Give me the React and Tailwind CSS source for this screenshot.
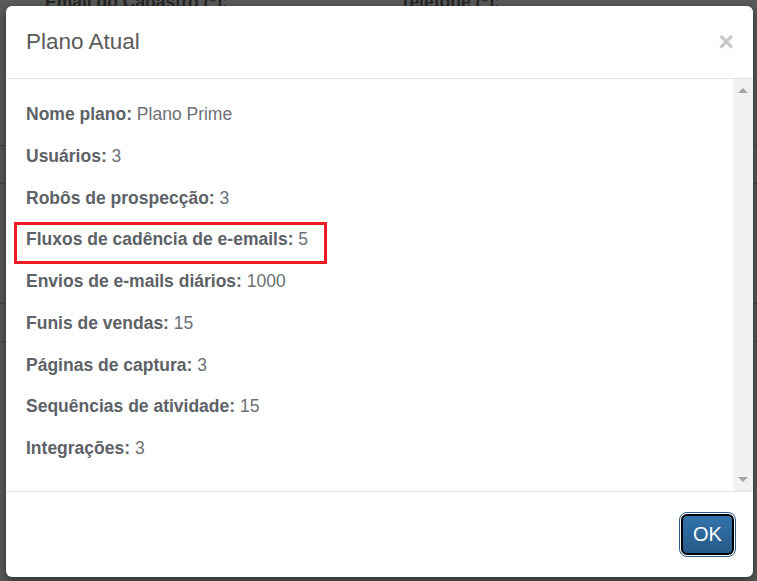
import React from "react";

// dados do plano atual
const planRows = [
  { label: "Nome plano:", value: "Plano Prime" },
  { label: "Usuários:", value: "3" },
  { label: "Robôs de prospecção:", value: "3" },
  { label: "Fluxos de cadência de e-emails:", value: "5", highlight: true },
  { label: "Envios de e-mails diários:", value: "1000" },
  { label: "Funis de vendas:", value: "15" },
  { label: "Páginas de captura:", value: "3" },
  { label: "Sequências de atividade:", value: "15" },
  { label: "Integrações:", value: "3" },
];

const App = () => {
  return (
    <div className="relative h-[581px] w-[757px] overflow-hidden bg-[#5b5b5b] font-['Liberation_Sans',Arial,sans-serif]">
      {/* página por trás do backdrop */}
      <div className="-mt-[9px] flex flex-col">
        <div className="flex text-[17.5px] font-bold leading-[22px] text-[#262626]">
          <span className="ml-[45px] w-[355px]">Email do Cadastro (*):</span>
          <span>Telefone (*):</span>
        </div>
        <div className="-mx-[10px] mt-[132px] h-[39px] border border-[#444]" />
        <div className="-mx-[10px] mt-[119px] h-[39px] border border-[#444]" />
      </div>

      <div className="absolute left-[6px] top-[6px] flex h-[571px] w-[747px] flex-col rounded-[6px] bg-white shadow-[0_4px_12px_rgba(0,0,0,0.5)]">
        <div className="flex h-[73px] items-center justify-between border-b border-[#e5e5e5] pl-[20px] pr-[19px]">
          <h4 className="text-[22.5px] leading-none text-[#5a5a5a]">Plano Atual</h4>
          <button className="text-[27px] font-bold leading-none text-[#c8c8c8]">×</button>
        </div>

        <div className="flex h-[412px]">
          <div className="flex flex-1 flex-col gap-[19.75px] pl-[20px] pt-[24px]">
            {planRows.map((row, i) => (
              <div key={i} className="relative text-[17.5px] leading-[22px] text-[#6b7075]">
                <span className="font-bold text-[#5d6267]">{row.label}</span> {row.value}
                {row.highlight && (
                  <div className="absolute -left-[12px] -top-[6px] h-[42px] w-[313px] border-[3px] border-[#ec1c24]" />
                )}
              </div>
            ))}
          </div>
          <div className="flex w-[20px] flex-col items-center justify-between bg-[#f1f1f1] py-[9px]">
            <div className="h-0 w-0 border-x-[5px] border-b-[5px] border-x-transparent border-b-[#a3a3a3]" />
            <div className="h-0 w-0 border-x-[5px] border-t-[5px] border-x-transparent border-t-[#a3a3a3]" />
          </div>
        </div>

        <div className="flex h-[85px] items-center justify-end border-t border-[#e5e5e5] pr-[19px]">
          <button className="flex h-[41px] w-[53px] items-center justify-center rounded-[6px] border-2 border-black bg-gradient-to-b from-[#3273ab] to-[#265a88] text-[20px] text-white outline outline-1 outline-offset-1 outline-[#2a5a83]">
            OK
          </button>
        </div>
      </div>
    </div>
  );
};

export default App;
